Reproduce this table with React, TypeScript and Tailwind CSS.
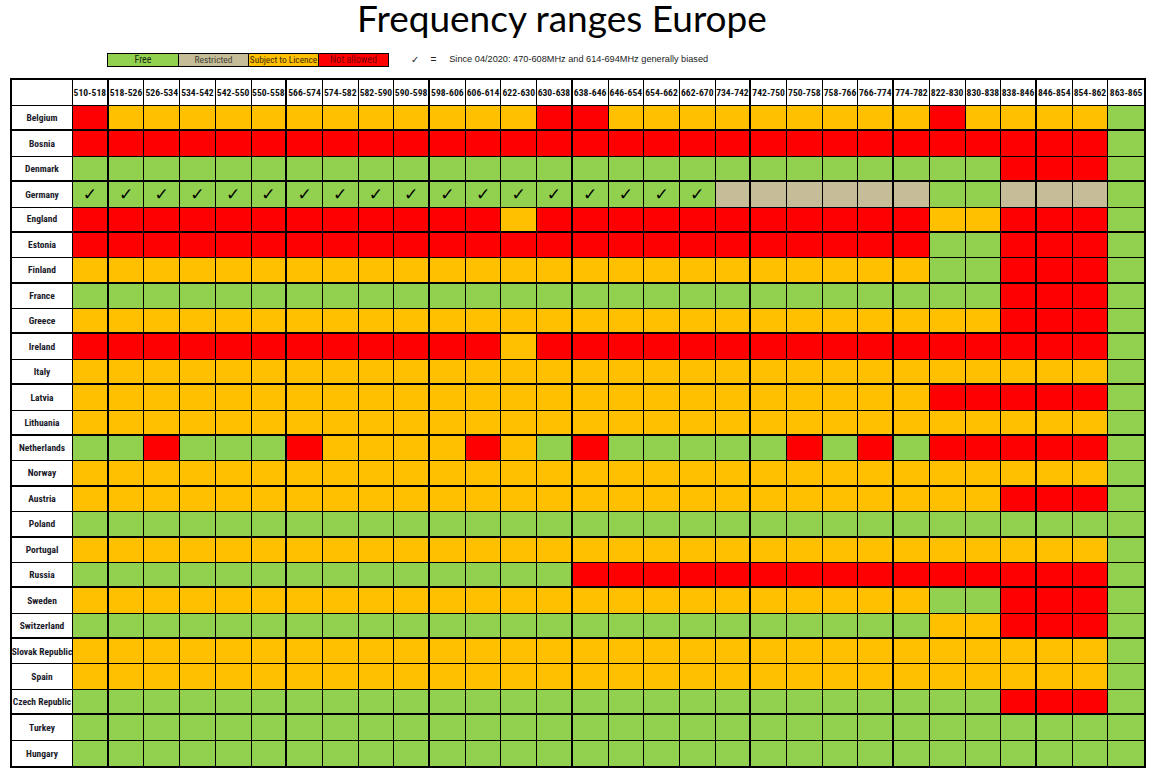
import React from "react";

const COLS = [
  "510-518", "518-526", "526-534", "534-542", "542-550", "550-558", "566-574", "574-582",
  "582-590", "590-598", "598-606", "606-614", "622-630", "630-638", "638-646", "646-654",
  "654-662", "662-670", "734-742", "742-750", "750-758", "758-766", "766-774", "774-782",
  "822-830", "830-838", "838-846", "846-854", "854-862", "863-865",
];

const r = (c: string, n: number) => c.repeat(n);

const ROWS: [string, string][] = [
  ["Belgium", "R" + r("Y", 12) + "RR" + r("Y", 9) + "R" + "YYYY" + "G"],
  ["Bosnia", r("R", 29) + "G"],
  ["Denmark", r("G", 26) + "RRR" + "G"],
  ["Germany", r("C", 18) + r("T", 6) + "GG" + "TTT" + "G"],
  ["England", r("R", 12) + "Y" + r("R", 11) + "YY" + "RRR" + "G"],
  ["Estonia", r("R", 24) + "GG" + "RRR" + "G"],
  ["Finland", r("Y", 24) + "GG" + "RRR" + "G"],
  ["France", r("G", 26) + "RRR" + "G"],
  ["Greece", r("Y", 26) + "RRR" + "G"],
  ["Ireland", r("R", 12) + "Y" + r("R", 16) + "G"],
  ["Italy", r("Y", 29) + "G"],
  ["Latvia", r("Y", 24) + r("R", 5) + "G"],
  ["Lithuania", r("Y", 29) + "G"],
  ["Netherlands", "GGRGGGRYYYYRYGR" + "GGGGG" + "R" + "G" + "R" + "G" + "RRRRR" + "G"],
  ["Norway", r("Y", 29) + "G"],
  ["Austria", r("Y", 26) + "RRR" + "G"],
  ["Poland", r("G", 30)],
  ["Portugal", r("Y", 29) + "G"],
  ["Russia", r("G", 14) + r("R", 15) + "G"],
  ["Sweden", r("Y", 24) + "GG" + "RRR" + "G"],
  ["Switzerland", r("G", 24) + "YY" + "RRR" + "G"],
  ["Slovak Republic", r("Y", 29) + "G"],
  ["Spain", r("Y", 29) + "G"],
  ["Czech Republic", r("G", 26) + "RRR" + "G"],
  ["Turkey", r("G", 30)],
  ["Hungary", r("G", 30)],
];

const BG: Record<string, string> = {
  G: "bg-[#92d050]",
  C: "bg-[#92d050]",
  Y: "bg-[#ffc000]",
  R: "bg-[#ff0000]",
  T: "bg-[#c4bd97]",
};

const thickCols = new Set([0, 5, 9, 13, 18, 22, 26]);
const thickRows = new Set([0, 2, 4, 6, 8, 10, 12, 14, 16, 18, 20, 23]);

const narrow = "font-['Liberation_Sans_Narrow','Arial_Narrow','Roboto_Condensed',Roboto,sans-serif]";

export default function App() {
  return (
    <div className="w-[1164px] h-[776px] bg-white overflow-hidden text-black">
      <div className="w-[1124px] h-[35px] pt-px text-center leading-[34px] text-[37px] font-['Lato',sans-serif] text-black whitespace-nowrap">
        Frequency ranges Europe
      </div>

      <div className="mt-[18px] h-[14px] flex items-center">
        <div className="ml-[107px] flex h-[14px] border border-black">
          <div className={`w-[70px] bg-[#92d050] flex items-center justify-center text-[10px] leading-none text-[#1a2a10] ${narrow}`}>
            Free
          </div>
          <div className={`w-[70px] border-l border-black bg-[#c4bd97] flex items-center justify-center text-[9.5px] leading-none text-[#444438] ${narrow}`}>
            Restricted
          </div>
          <div className={`w-[70px] border-l border-black bg-[#ffc000] flex items-center justify-center text-[9.3px] leading-none text-[#3d2a00] whitespace-nowrap overflow-hidden ${narrow}`}>
            Subject to Licence
          </div>
          <div className={`w-[70px] border-l border-black bg-[#ff0000] flex items-center justify-center text-[10px] leading-none text-[#7a0000] ${narrow}`}>
            Not allowed
          </div>
        </div>
        <div className="ml-[22px] text-[10px] leading-none font-['DejaVu_Sans',sans-serif] text-[#222]">✓</div>
        <div className="ml-[11px] text-[10px] leading-none font-['Liberation_Sans',sans-serif] text-[#222]">=</div>
        <div className="ml-[13px] text-[9.2px] leading-none font-['Liberation_Sans',sans-serif] text-[#222] whitespace-nowrap">
          Since 04/2020: 470-608MHz and 614-694MHz generally biased
        </div>
      </div>

      <div className="mt-[11px] ml-[10px] w-[1136px] h-[690px] border-2 border-black grid grid-cols-[61px_repeat(30,minmax(0,1fr))] grid-rows-[26px_repeat(26,minmax(0,1fr))]">
        <div className="bg-white border-r border-b border-black" />
        {COLS.map((c, i) => (
          <div
            key={c}
            className={`bg-white border-b border-black flex items-center justify-center text-[9.6px] font-bold leading-none whitespace-nowrap text-[#111] ${narrow} ${
              i === COLS.length - 1 ? "" : thickCols.has(i) ? "border-r-2" : "border-r"
            }`}
          >
            {c}
          </div>
        ))}
        {ROWS.map(([name, cells], ri) => {
          const last = ri === ROWS.length - 1;
          const bRow = last ? "" : thickRows.has(ri) ? "border-b-2" : "border-b";
          return (
            <React.Fragment key={name}>
              <div
                className={`bg-white border-r border-black flex items-center justify-center text-[9.5px] font-bold leading-none whitespace-nowrap text-[#1a1a2a] ${narrow} ${bRow}`}
              >
                {name}
              </div>
              {cells.split("").map((code, ci) => (
                <div
                  key={ci}
                  className={`${BG[code]} border-black flex items-center justify-center ${bRow} ${
                    ci === cells.length - 1 ? "" : thickCols.has(ci) ? "border-r-2" : "border-r"
                  }`}
                >
                  {code === "C" ? (
                    <span className="text-[17px] leading-none font-bold font-['DejaVu_Sans',sans-serif] text-black">
                      ✓
                    </span>
                  ) : null}
                </div>
              ))}
            </React.Fragment>
          );
        })}
      </div>
    </div>
  );
}
